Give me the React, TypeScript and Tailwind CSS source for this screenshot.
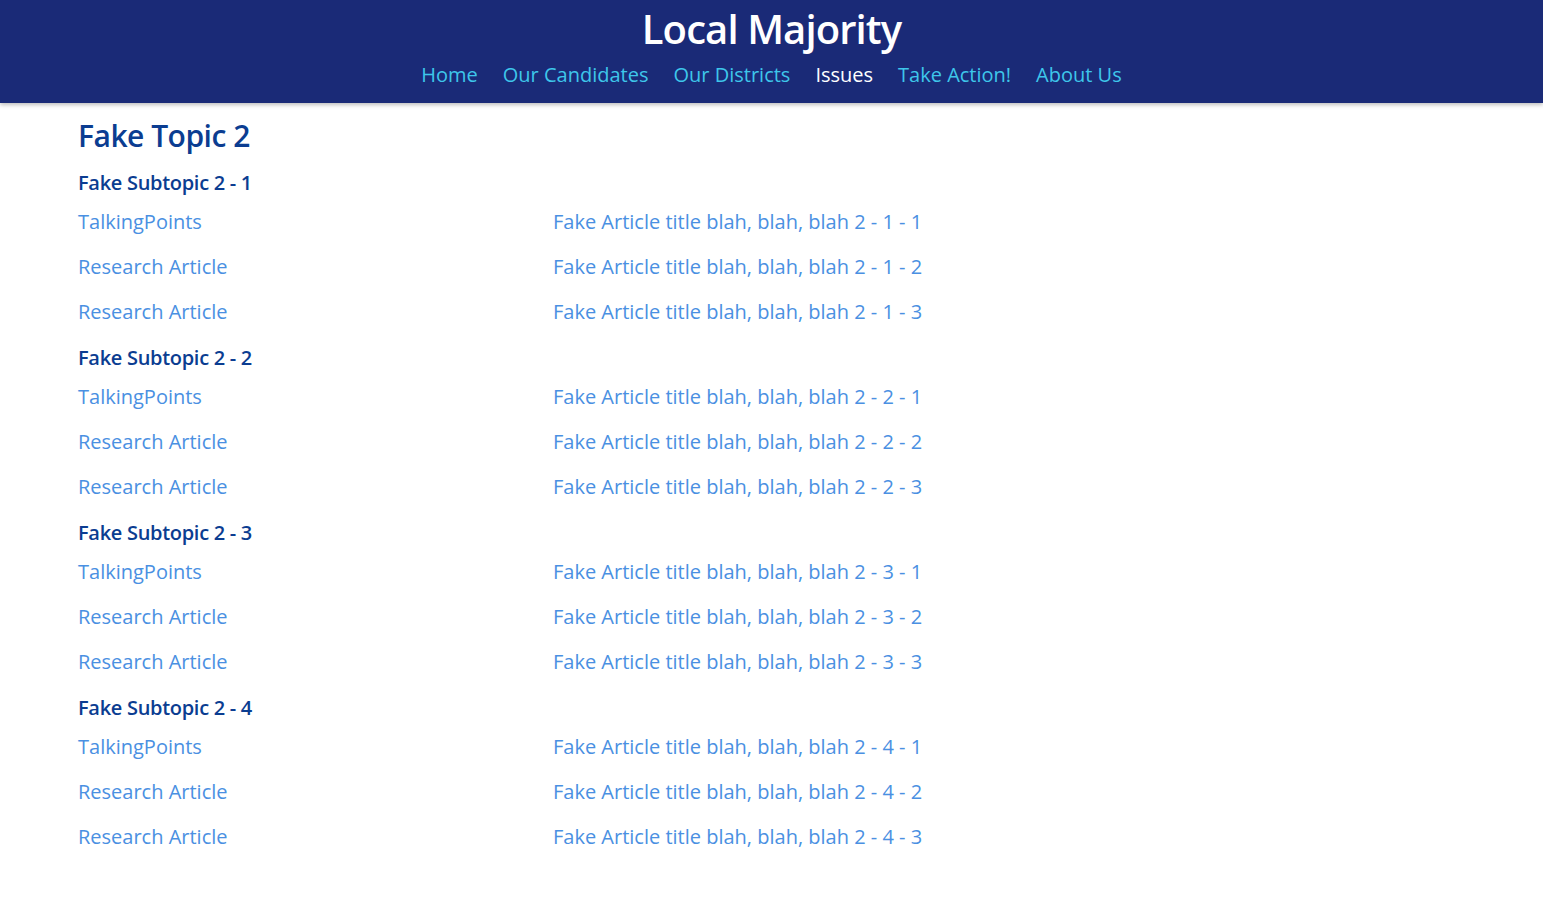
import React from 'react';

const navItems = [
  { label: 'Home', active: false },
  { label: 'Our Candidates', active: false },
  { label: 'Our Districts', active: false },
  { label: 'Issues', active: true },
  { label: 'Take Action!', active: false },
  { label: 'About Us', active: false },
];

const subtopics = [1, 2, 3, 4].map((s) => ({
  title: `Fake Subtopic 2 - ${s}`,
  rows: [
    { kind: 'TalkingPoints', title: `Fake Article title blah, blah, blah 2 - ${s} - 1` },
    { kind: 'Research Article', title: `Fake Article title blah, blah, blah 2 - ${s} - 2` },
    { kind: 'Research Article', title: `Fake Article title blah, blah, blah 2 - ${s} - 3` },
  ],
}));

export default function App() {
  return (
    <div className="min-h-screen bg-white font-['Open_Sans',sans-serif]">
      <header className="bg-[#1a2a77] h-[103px] flex flex-col items-center shadow-[0_2px_4px_rgba(0,0,0,0.25)]">
        <h1 className="text-white text-[40px] font-semibold leading-none mt-[9px] tracking-[-0.9px]">
          Local Majority
        </h1>
        <nav className="flex gap-[25px] mt-[13px]">
          {navItems.map((item) => (
            <a
              key={item.label}
              href="#"
              className={`text-[20px] leading-[26px] ${item.active ? 'text-white' : 'text-[#3ec6ea]'}`}
            >
              {item.label}
            </a>
          ))}
        </nav>
      </header>

      <main className="px-[78px] pt-[13px] pb-[40px]">
        <h2 className="text-[#0b3d91] text-[30px] font-semibold leading-[40px] tracking-[-0.5px]">Fake Topic 2</h2>
        {subtopics.map((sub, idx) => (
          <section key={sub.title} className={idx === 0 ? 'mt-[10px]' : 'mt-[7px]'}>
            <h3 className="text-[#0b3d91] text-[20px] font-semibold leading-[33px] tracking-[-0.3px]">{sub.title}</h3>
            {sub.rows.map((row, i) => (
              <div key={i} className="grid grid-cols-[475px_1fr] h-[45px] items-center">
                <a href="#" className="text-[#4a90e2] text-[20px]">{row.kind}</a>
                <a href="#" className="text-[#4a90e2] text-[20px]">{row.title}</a>
              </div>
            ))}
          </section>
        ))}
      </main>
    </div>
  );
}
